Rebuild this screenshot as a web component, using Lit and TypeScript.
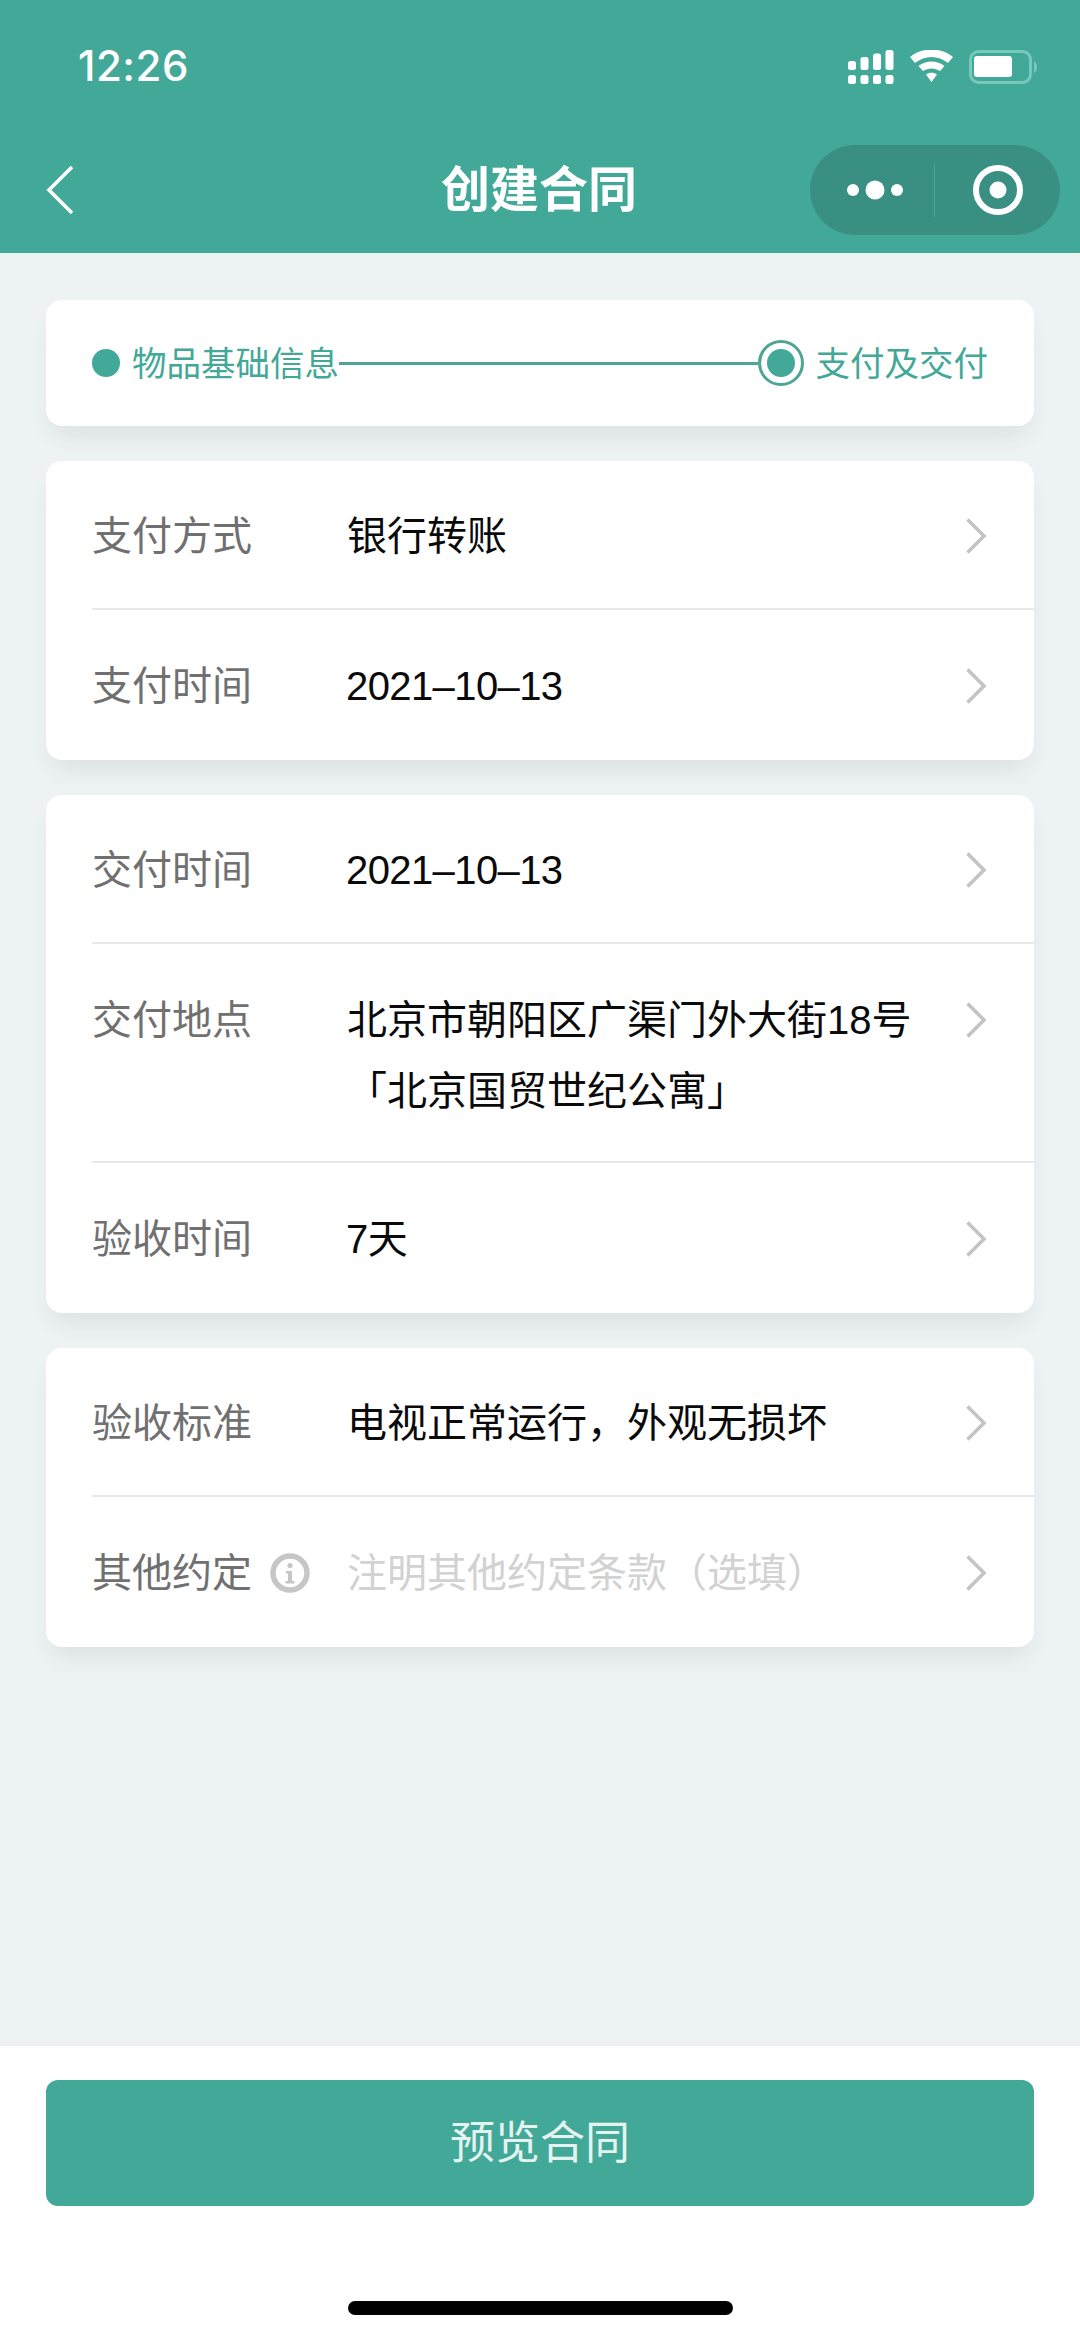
import { LitElement, html, css, svg } from "lit";
import { customElement } from "lit/decorators.js";

const chevron = html`<svg class="chev" width="22" height="36" viewBox="0 0 22 36"><path d="M2.5 1.500 L19 18 L2.500 34.500" fill="none" stroke="#c4c4c4" stroke-width="3.600"/></svg>`;

const info = html`<svg class="info" width="40" height="40" viewBox="0 0 40 40">
  <circle cx="20" cy="20" r="17" fill="none" stroke="#c6c6c6" stroke-width="5.500"/>
  <circle cx="20" cy="12.500" r="2.600" fill="#c6c6c6"/>
  <path d="M16 18h6v10h2.500v2.500h-9V28h2.500v-7.500H16z" fill="#c6c6c6"/>
</svg>`;

interface Row { label: string; value: string[]; info?: boolean; placeholder?: boolean; num?: boolean }

const groups: Row[][] = [
  [
    { label: "支付方式", value: ["银行转账"] },
    { label: "支付时间", value: ["2021–10–13"], num: true },
  ],
  [
    { label: "交付时间", value: ["2021–10–13"], num: true },
    { label: "交付地点", value: ["北京市朝阳区广渠门外大街18号", "「北京国贸世纪公寓」"] },
    { label: "验收时间", value: ["7天"], num: true },
  ],
  [
    { label: "验收标准", value: ["电视正常运行，外观无损坏"] },
    { label: "其他约定", value: ["注明其他约定条款（选填）"], info: true, placeholder: true },
  ],
];

@customElement("app-root")
export class AppRoot extends LitElement {
  static styles = css`
    :host {
      display: flex;
      flex-direction: column;
      width: 1080px;
      height: 2339px;
      background: #edf2f3;
      font-family: "Liberation Sans", "Noto Sans CJK SC", sans-serif;
      overflow: hidden;
    }
    .head {
      height: 253px;
      background: #42a898;
      color: #fff;
      display: flex;
      flex-direction: column;
      flex: none;
      box-sizing: border-box;
    }
    .status {
      height: 145px;
      flex: none;
      display: flex;
      justify-content: space-between;
      align-items: flex-start;
      padding: 46px 37px 0 78px;
      box-sizing: border-box;
    }
    .time {
      font-size: 42px;
      line-height: 40px;
      letter-spacing: 0.5px;
      font-family: "Inter", "Liberation Sans", sans-serif;
      font-weight: 500;
    }
    .status svg { display: block; margin-top: 4px; }
    .nav {
      height: 90px;
      display: flex;
      align-items: center;
      justify-content: space-between;
      padding: 0 20px 0 46px;
      position: relative;
    }
    .title {
      position: absolute;
      left: 0;
      right: 2px;
      text-align: center;
      font-size: 49px;
      font-weight: 700;
      line-height: 90px;
    }
    .back { display: block; }
    .pill {
      width: 250px;
      height: 90px;
      border-radius: 45px;
      background: #398f82;
      display: flex;
      align-items: center;
      position: relative;
      z-index: 1;
    }
    .pill-l, .pill-r {
      display: flex;
      align-items: center;
      justify-content: center;
    }
    .pill-l { width: 125px; height: 54px; border-right: 1px solid #4fa195; padding-left: 6px; box-sizing: border-box; }
    .pill-r { width: 125px; }
    .main {
      flex: 1;
      padding: 47px 46px 0;
      display: flex;
      flex-direction: column;
      gap: 35px;
    }
    .card {
      background: #fff;
      border-radius: 16px;
      box-shadow: 0 16px 24px -8px rgba(60, 80, 80, 0.11);
    }
    .steps {
      height: 126px;
      display: flex;
      align-items: center;
      padding: 0 46px;
      color: #42a898;
      font-size: 34.5px;
      box-sizing: border-box;
    }
    .steps span { margin-bottom: 5px; }
    .dot {
      width: 28px;
      height: 28px;
      border-radius: 50%;
      background: #42a898;
      flex: none;
      margin-right: 12px;
    }
    .line { flex: 1; height: 3px; background: #4fa595; }
    .ring {
      width: 46px;
      height: 46px;
      border-radius: 50%;
      border: 3px solid #4fa595;
      box-sizing: border-box;
      display: flex;
      align-items: center;
      justify-content: center;
      flex: none;
      margin-right: 12px;
    }
    .ring i { display: block; width: 28px; height: 28px; border-radius: 50%; background: #42a898; }
    .row {
      display: flex;
      align-items: flex-start;
      margin-left: 46px;
      padding: 51px 0 0;
      min-height: 150px;
      box-sizing: border-box;
      font-size: 40px;
      line-height: 50px;
      border-bottom: 2px solid #e8e8e8;
    }
    .row:first-child { padding-top: 50px; min-height: 149px; }
    .row:last-child { border-bottom: none; }
    .row.multi { padding-bottom: 45px; }
    .label {
      width: 255px;
      flex: none;
      color: #707070;
      display: flex;
      align-items: center;
      gap: 18px;
    }
    .value { flex: 1; color: #0a0a0a; line-height: 71px; margin-top: -10.5px; margin-bottom: -10.5px; }
    .value div { white-space: nowrap; }
    .value.ph { color: #d2d2d2; }
    .value.num { letter-spacing: -0.6px; margin-left: -1px; }
    .chev { flex: none; margin: 7px 47px 0 0; display: block; }
    .info { flex: none; }
    .foot {
      height: 293px;
      flex: none;
      background: #fff;
      box-sizing: border-box;
      padding: 34px 46px 0;
      position: relative;
    }
    .btn {
      height: 126px;
      box-sizing: border-box;
      padding-bottom: 7px;
      background: #42a898;
      border-radius: 12px;
      color: #e4f3f0;
      font-size: 45px;
      display: flex;
      align-items: center;
      justify-content: center;
    }
    .home {
      position: absolute;
      left: 348px;
      top: 255px;
      width: 385px;
      height: 14px;
      border-radius: 7px;
      background: #000;
    }
  `;

  private renderRow(r: Row) {
    return html`<div class="row ${r.value.length > 1 ? "multi" : ""}">
      <div class="label"><span>${r.label}</span>${r.info ? info : ""}</div>
      <div class="value ${r.placeholder ? "ph" : ""} ${r.num ? "num" : ""}">${r.value.map((v) => html`<div>${v}</div>`)}</div>
      ${chevron}
    </div>`;
  }

  render() {
    return html`
      <div class="head">
        <div class="status">
          <div class="time">12:26</div>
          <svg width="200" height="36" viewBox="0 0 200 36" fill="#fff">
            ${[[0, 11, 9], [12.5, 7, 13], [25, 3.5, 16.5], [37.5, 0, 20]].map(
              ([x, y, h]) => svg`<rect x=${x + 5} y=${y} width="8" height=${h} rx="2.500"/>
                <rect x=${x + 5} y="25" width="8" height="9" rx="2.500"/>`,
            )}
            <path d="M67 7 C78 -3 99 -3 110 7 L105 13 C95 5 82 5 72 13Z"/>
            <path d="M75.500 16 C83 10 94 10 101.500 16 L97 21 C92 17.500 85 17.500 80 21Z"/>
            <path d="M83 24.500 C86 22 91 22 94 24.500 L88.500 32Z"/>
            <rect x="127.500" y="1.500" width="60" height="31" rx="8" fill="none" stroke="#77c9bc" stroke-width="3"/>
            <rect x="131" y="6" width="38" height="21" rx="3"/>
            <path d="M191 11 C195 14 195 20 191 23Z" fill="#77c9bc"/>
          </svg>
        </div>
        <div class="nav">
          <div class="title">创建合同</div>
          <svg class="back" width="28" height="52" viewBox="0 0 28 52"><path d="M26 3 L3 26 L26 49" fill="none" stroke="#fff" stroke-width="3.600"/></svg>
          <div class="pill">
            <div class="pill-l">
              <svg width="56" height="20" viewBox="0 0 56 20" fill="#fff"><circle cx="6" cy="10" r="6"/><circle cx="28" cy="10" r="9.500"/><circle cx="50" cy="10" r="6"/></svg>
            </div>
            <div class="pill-r">
              <svg width="52" height="52" viewBox="0 0 52 52"><circle cx="26" cy="26" r="22" fill="none" stroke="#fff" stroke-width="6"/><circle cx="26" cy="26" r="8.500" fill="#fff"/></svg>
            </div>
          </div>
        </div>
      </div>
      <div class="main">
        <div class="card steps">
          <div class="dot"></div><span>物品基础信息</span>
          <div class="line"></div>
          <div class="ring"><i></i></div><span>支付及交付</span>
        </div>
        ${groups.map((g) => html`<div class="card">${g.map((r) => this.renderRow(r))}</div>`)}
      </div>
      <div class="foot">
        <div class="btn">预览合同</div>
        <div class="home"></div>
      </div>
    `;
  }
}
